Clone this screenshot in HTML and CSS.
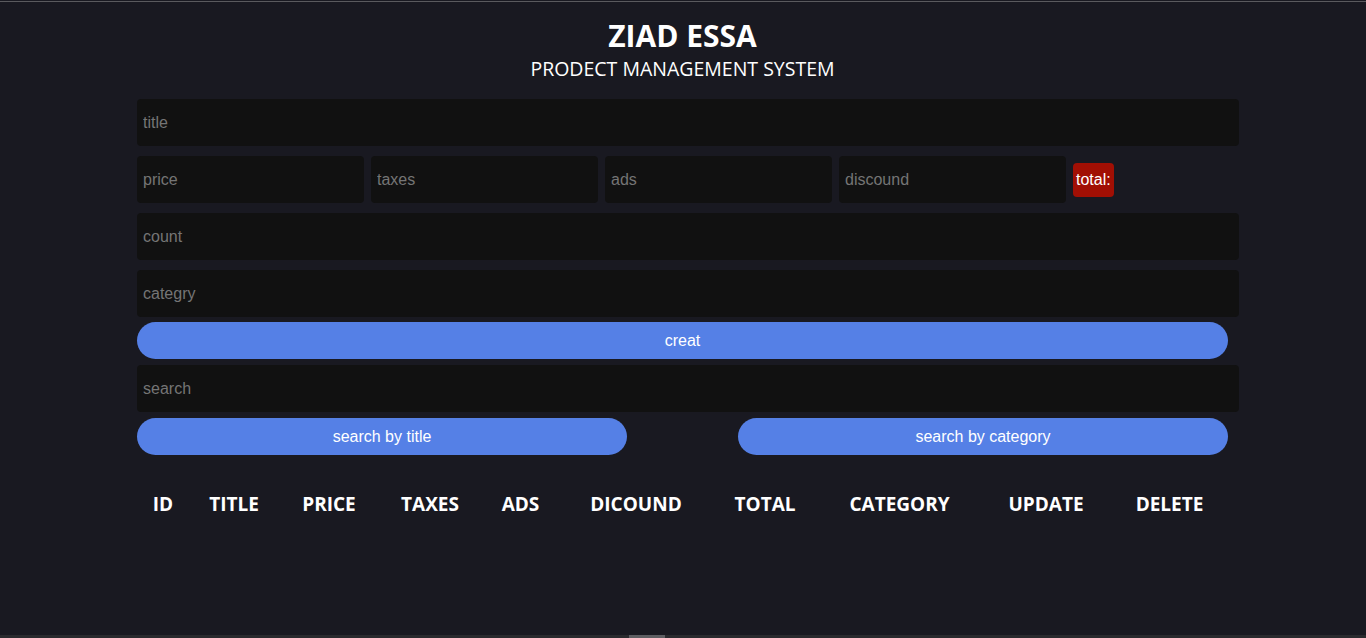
FILE: index.html
```html
<!DOCTYPE html>
<html>
<head>
<meta charset="utf-8">
<title>CRUDS</title>
<link rel="stylesheet" href="styles.css">
</head>
<body>
<div class="topline"></div>
<div class="crud">
  <header class="head">
    <h2 class="name">ZIAD ESSA</h2>
    <p class="sub">PRODECT MANAGEMENT SYSTEM</p>
  </header>
  <div class="inputs">
    <input class="field" type="text" placeholder="title">
    <div class="price-row">
      <input class="field small" type="number" placeholder="price">
      <input class="field small" type="number" placeholder="taxes">
      <input class="field small" type="number" placeholder="ads">
      <input class="field small" type="number" placeholder="discound">
      <small class="total">total:</small>
    </div>
    <input class="field" type="number" placeholder="count">
    <input class="field" type="text" placeholder="categry">
    <button class="btn wide">creat</button>
  </div>
  <div class="search-block">
    <input class="field" type="text" placeholder="search">
    <div class="search-btns">
      <button class="btn half">search by title</button>
      <button class="btn half">search by category</button>
    </div>
  </div>
  <div class="outputs">
    <div class="thead">
      <span>ID</span>
      <span>TITLE</span>
      <span>PRICE</span>
      <span>TAXES</span>
      <span>ADS</span>
      <span>DICOUND</span>
      <span>TOTAL</span>
      <span>CATEGORY</span>
      <span>UPDATE</span>
      <span>DELETE</span>
    </div>
  </div>
</div>
<div class="hscroll"><div class="thumb"></div></div>
</body>
</html>
```
FILE: styles.css
```css
* { box-sizing: border-box; }
html, body { height: 100%; }
body {
  margin: 0;
  padding-top: 1px;
  background: #191921;
  color: #fff;
  font-family: "Liberation Sans", Arial, sans-serif;
  overflow: hidden;
}
.topline { height: 1px; background: #5a5a5e; }
.crud {
  width: 1102px;
  margin-left: 137px;
}
.head {
  width: 1091px;
  text-align: center;
  font-family: "Open Sans", "Noto Sans", sans-serif;
  padding-top: 14px;
}
.name {
  margin: 0;
  font-size: 30px;
  font-weight: 700;
  line-height: 40px;
}
.sub {
  margin: 0;
  font-size: 19.5px;
  line-height: 26px;
  font-weight: 400;
}
.inputs {
  margin-top: 17px;
  display: flex;
  flex-direction: column;
  gap: 10px;
}
.field {
  display: block;
  width: 100%;
  height: 47px;
  border: none;
  outline: none;
  border-radius: 4px;
  background: #111111;
  color: #fff;
  padding: 0 6px;
  font-family: "Liberation Sans", Arial, sans-serif;
  font-size: 16px;
}
.field::placeholder { color: #757575; }
.field::-webkit-outer-spin-button,
.field::-webkit-inner-spin-button { -webkit-appearance: none; margin: 0; }
.price-row {
  display: flex;
  align-items: center;
  gap: 7px;
}
.field.small { width: 227px; flex: none; }
.total {
  background: #a10f04;
  color: #fff;
  font-size: 16px;
  height: 34px;
  line-height: 34px;
  padding: 0 3px;
  border-radius: 4px;
}
.btn {
  display: block;
  height: 37px;
  border: none;
  border-radius: 19px;
  background: #5580e6;
  color: #fff;
  font-family: "Liberation Sans", Arial, sans-serif;
  font-size: 16px;
  cursor: pointer;
}
.wide { width: 1091px; margin-top: -5px; }
.search-block { margin-top: 6px; }
.search-btns {
  display: flex;
  justify-content: space-between;
  width: 1091px;
  margin-top: 6px;
}
.half { width: 490px; }
.outputs { margin-top: 36px; }
.thead {
  display: grid;
  grid-template-columns: 52px 90px 100px 102px 79px 152px 106px 163px 130px 117px;
  font-family: "Open Sans", "Noto Sans", sans-serif;
  font-size: 19px;
  font-weight: 700;
  line-height: 26px;
  text-align: center;
}
.hscroll {
  position: fixed;
  left: 0;
  right: 0;
  bottom: 0;
  height: 3px;
  background: #2a2a2e;
}
.thumb {
  position: absolute;
  left: 629px;
  width: 36px;
  top: 0;
  bottom: 0;
  background: #5e5e62;
}
```
